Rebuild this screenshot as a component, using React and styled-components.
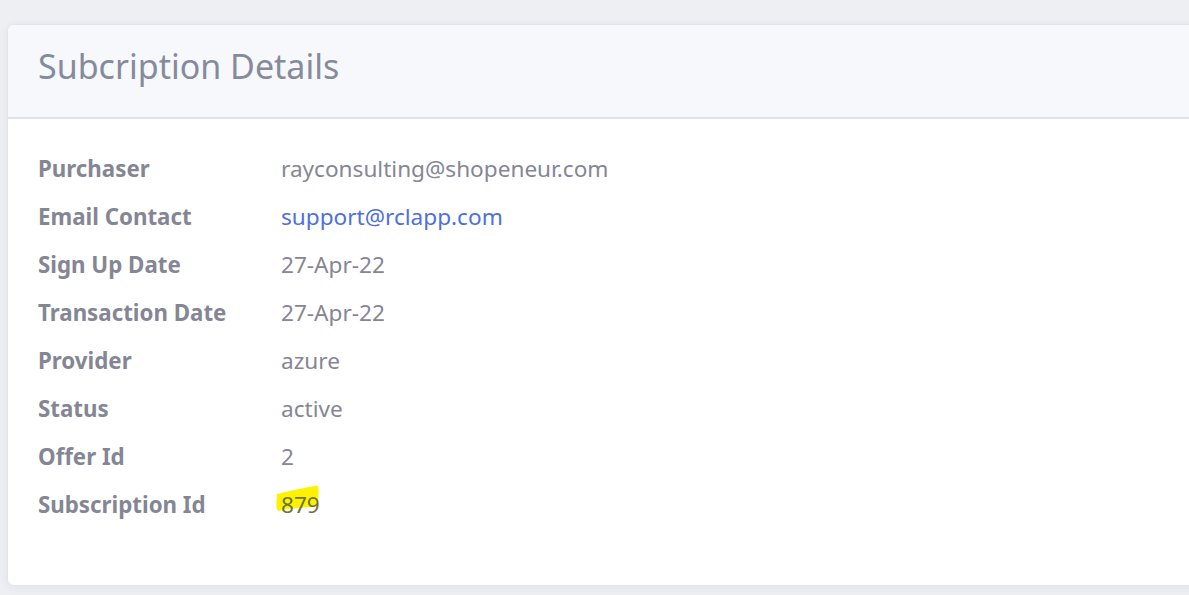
import React from "react";
import styled, { createGlobalStyle } from "styled-components";

const Global = createGlobalStyle`
  html, body { margin: 0; padding: 0; }
  body {
    background: #eeeff3;
    font-family: "Noto Sans", "Open Sans", sans-serif;
    width: 1189px;
    height: 595px;
    overflow: hidden;
  }
`;

const Page = styled.div`
  padding: 24px 0 0 7px;
`;

const Card = styled.section`
  width: 1240px;
  height: 562px;
  background: #ffffff;
  border-radius: 7px;
  border: 1px solid #e3e5ec;
  box-shadow: 0 2px 10px rgba(40, 45, 70, 0.06);
  box-sizing: border-box;
  overflow: hidden;
  display: flex;
  flex-direction: column;
`;

const Header = styled.header`
  background: #f7f8fc;
  border-bottom: 2px solid #e1e3ea;
  height: 94px;
  box-sizing: border-box;
  display: flex;
  align-items: center;
  padding: 0 30px 10px;
`;

const Title = styled.h1`
  margin: 0;
  font-size: 34px;
  font-weight: 400;
  color: #858b9c;
  letter-spacing: 0;
`;

const Body = styled.div`
  padding: 25px 30px;
  display: flex;
  flex-direction: column;
`;

const Row = styled.div`
  display: grid;
  grid-template-columns: 243px 1fr;
  height: 48px;
  align-items: center;
`;

const Label = styled.div`
  font-size: 22.3px;
  font-weight: 700;
  color: #858694;
`;

const Value = styled.div`
  font-size: 22.6px;
  color: ${(p) => (p.$link ? "#4e6fe0" : "#858694")};
`;

const Marked = styled.span`
  position: relative;
  display: inline-block;
  z-index: 0;
  color: #6d7330;
`;

const Marker = styled.svg`
  position: absolute;
  left: -6px;
  top: -4px;
  width: 46px;
  height: 30px;
  z-index: -1;
`;

const rows = [
  ["Purchaser", "rayconsulting@shopeneur.com"],
  ["Email Contact", "support@rclapp.com", true],
  ["Sign Up Date", "27-Apr-22"],
  ["Transaction Date", "27-Apr-22"],
  ["Provider", "azure"],
  ["Status", "active"],
  ["Offer Id", "2"],
];

export default function App() {
  return (
    <>
      <Global />
      <Page>
        <Card>
          <Header>
            <Title>Subcription Details</Title>
          </Header>
          <Body>
            {rows.map(([l, v, link]) => (
              <Row key={l}>
                <Label>{l}</Label>
                <Value $link={link}>{v}</Value>
              </Row>
            ))}
            <Row>
              <Label>Subscription Id</Label>
              <Value>
                <Marked>
                  <Marker viewBox="0 0 46 30">
                    <path
                      d="M2 9 C10 7 24 4 34 2 L42 0.5 Q44 2 43.5 8 L43 21 Q40 22 34 22 L12 24 L3 26 Q1 24 1.5 18 Z"
                      fill="#fff200"
                    />
                  </Marker>
                  879
                </Marked>
              </Value>
            </Row>
          </Body>
        </Card>
      </Page>
    </>
  );
}
